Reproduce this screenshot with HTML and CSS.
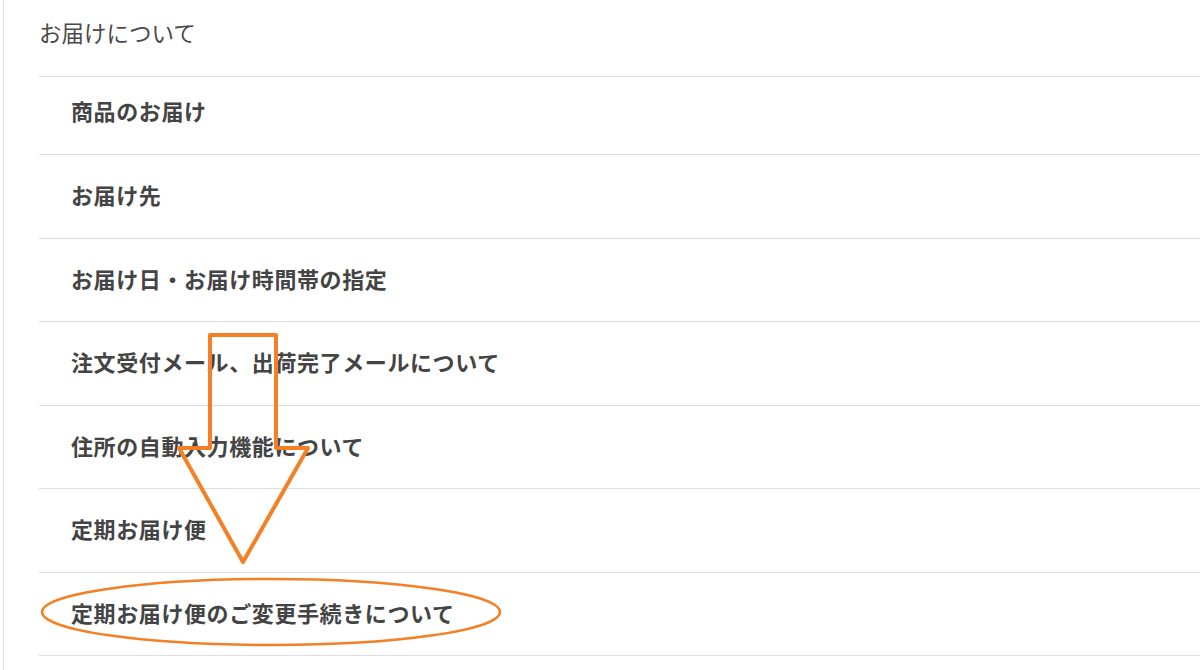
FILE: index.html
```html
<!DOCTYPE html>
<html lang="ja">
<head>
<meta charset="utf-8">
<title>お届けについて</title>
<link rel="stylesheet" href="styles.css">
</head>
<body>
<div class="page">
  <section class="panel">
    <h2 class="panel-title">お届けについて</h2>
    <ul class="menu">
      <li class="menu-item first">商品のお届け</li>
      <li class="menu-item">お届け先</li>
      <li class="menu-item">お届け日・お届け時間帯の指定</li>
      <li class="menu-item">注文受付メール、出荷完了メールについて</li>
      <li class="menu-item">住所の自動入力機能について</li>
      <li class="menu-item">定期お届け便</li>
      <li class="menu-item">定期お届け便のご変更手続きについて</li>
    </ul>
  </section>
  <svg class="annot" width="1200" height="670" viewBox="0 0 1200 670" xmlns="http://www.w3.org/2000/svg">
    <path d="M210 335 L276 335 L276 448 L308 448 L243 562 L179 448 L210 448 Z" fill="none" stroke="#f47f25" stroke-width="4" stroke-linejoin="round"/>
    <ellipse cx="271" cy="612" rx="229" ry="33" fill="none" stroke="#f47f25" stroke-width="2.5"/>
  </svg>
</div>
</body>
</html>
```
FILE: styles.css
```css
html, body {
  margin: 0;
  padding: 0;
  background: #fff;
}
.page {
  position: relative;
  width: 1200px;
  height: 670px;
  overflow: hidden;
  font-family: "Noto Sans CJK JP", "Noto Sans", sans-serif;
  color: #444;
}
.panel {
  margin-left: 3px;
  border-left: 1px solid #e2e2e2;
  padding-left: 35px;
  height: 670px;
}
.panel-title {
  margin: 0;
  padding-top: 21px;
  height: 55px;
  box-sizing: content-box;
  font-size: 22.5px;
  line-height: 22px;
  font-weight: 400;
  color: #4a4a4a;
  border-bottom: 1px solid #dcdcdc;
}
.menu {
  list-style: none;
  margin: 0;
  padding: 0;
}
.menu-item {
  padding: 28px 0 32.5px 32px;
  font-size: 22px;
  line-height: 22px;
  font-weight: 700;
  color: #444;
  border-bottom: 1px solid #dcdcdc;
  letter-spacing: 0.6px;
}
.menu-item.first {
  padding-top: 22px;
  padding-bottom: 33px;
}
.annot {
  position: absolute;
  left: 0;
  top: 0;
}
```
